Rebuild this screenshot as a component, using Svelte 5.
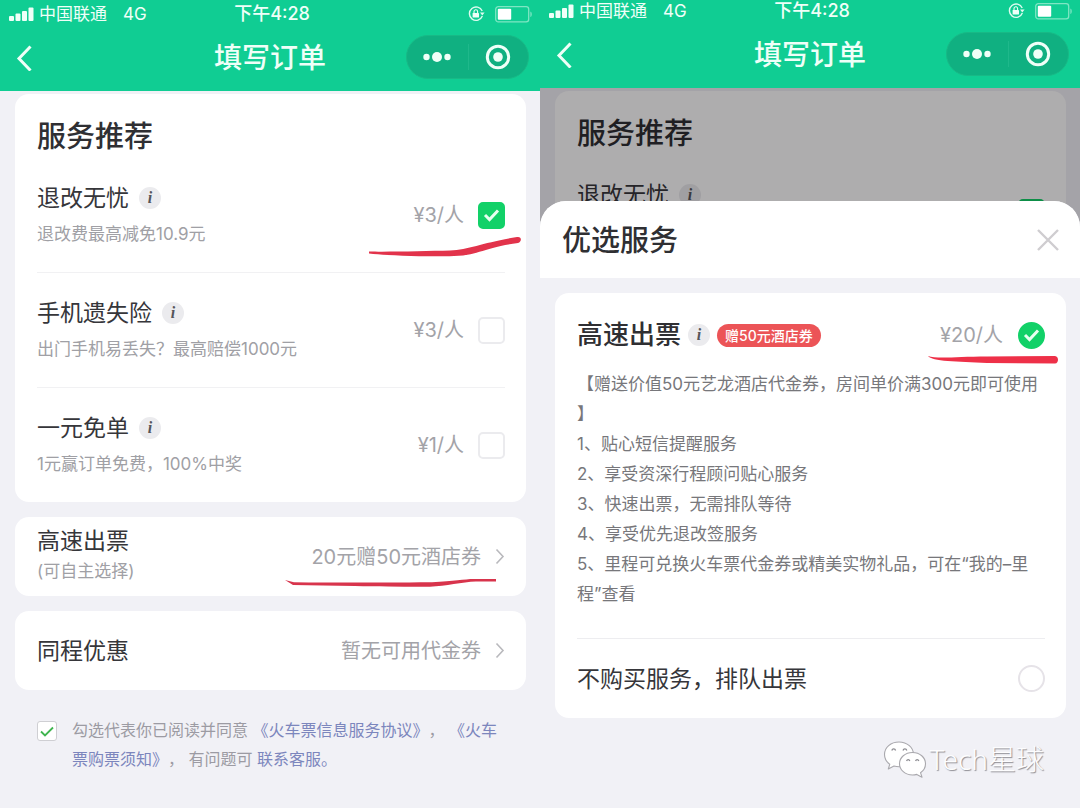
<script>
  const services = [
    { id: 'refund', title: '退改无忧', note: '退改费最高减免10.9元', price: '¥3/人', checked: true },
    { id: 'phone', title: '手机遗失险', note: '出门手机易丢失？最高赔偿1000元', price: '¥3/人', checked: false },
    { id: 'free', title: '一元免单', note: '1元赢订单免费，100%中奖', price: '¥1/人', checked: false }
  ];

  const perks = [
    '1、贴心短信提醒服务',
    '2、享受资深行程顾问贴心服务',
    '3、快速出票，无需排队等待',
    '4、享受优先退改签服务',
    '5、里程可兑换火车票代金券或精美实物礼品，可在“我的–里程”查看'
  ];
</script>

{#snippet info()}
  <span class="info" aria-hidden="true">i</span>
{/snippet}

{#snippet arrow()}
  <svg class="arrow" width="10" height="17" viewBox="0 0 10 17" aria-hidden="true">
    <path d="M1.5 1.5 8 8.5l-6.5 7" fill="none" stroke="#b9b9bd" stroke-width="1.6" />
  </svg>
{/snippet}

{#snippet header()}
  <header class="header">
    <div class="status">
      <div class="carrier">
        <svg width="25" height="15" viewBox="0 0 25 15" fill="#effff8" aria-hidden="true">
          <rect x="0" y="9" width="5" height="5" rx="1" />
          <rect x="6.5" y="6.5" width="5" height="7.5" rx="1" />
          <rect x="13" y="4" width="5" height="10" rx="1" />
          <rect x="19.5" y="0.5" width="5" height="13.5" rx="1" />
        </svg>
        <span>中国联通</span>
        <span class="net">4G</span>
      </div>
      <time class="clock">下午4:28</time>
      <div class="indicators">
        <svg width="17" height="16" viewBox="0 0 17 16" aria-hidden="true">
          <path d="M13 3.2A6.7 6.7 0 1 0 14.7 8" fill="none" stroke="#dffbf0" stroke-width="1.4" transform="rotate(18 8 8)" />
          <path d="M12 6.6h4.6l-2.3 3z" fill="#dffbf0" />
          <rect x="4.6" y="7" width="6.4" height="4.6" rx="0.6" fill="#effff8" />
          <path d="M6 7V5.6a1.8 1.8 0 0 1 3.6 0V7" fill="none" stroke="#effff8" stroke-width="1.1" />
        </svg>
        <svg width="38" height="17" viewBox="0 0 38 17" aria-hidden="true">
          <rect x="0.7" y="0.7" width="33" height="15.2" rx="2.6" fill="none" stroke="#7fe6c4" stroke-width="1.3" />
          <rect x="2.8" y="2.8" width="13.4" height="11" rx="1" fill="#fff" />
          <path d="M35.4 5.5c1.8.8 1.8 4.8 0 5.6z" fill="#7fe6c4" />
        </svg>
      </div>
    </div>
    <div class="nav">
      <button class="back" aria-label="返回">
        <svg width="18" height="28" viewBox="0 0 18 28" aria-hidden="true">
          <path d="M15.5 3.500 4 15.500l11.500 12" fill="none" stroke="#effff8" stroke-width="3" />
        </svg>
      </button>
      <h1>填写订单</h1>
      <div class="capsule">
        <button aria-label="更多">
          <svg width="28" height="12" viewBox="0 0 28 12" fill="#effff8" aria-hidden="true">
            <circle cx="3.5" cy="6" r="3.2" />
            <circle cx="14" cy="6" r="5" />
            <circle cx="24.5" cy="6" r="3.2" />
          </svg>
        </button>
        <button aria-label="关闭小程序">
          <svg width="26" height="26" viewBox="0 0 26 26" aria-hidden="true">
            <circle cx="13" cy="13" r="10.7" fill="none" stroke="#effff8" stroke-width="3" />
            <circle cx="13" cy="13" r="4.8" fill="#effff8" />
          </svg>
        </button>
      </div>
    </div>
  </header>
{/snippet}

{#snippet service(item, prefix)}
  <div class="service">
    <div class="words">
      <label class="name" for={prefix + item.id}>{item.title}{@render info()}</label>
      <p class="note">{item.note}</p>
    </div>
    <span class="price">{item.price}</span>
    <input class="tick" type="checkbox" id={prefix + item.id} checked={item.checked} />
    {#if item.checked && prefix === 'a-'}
      <svg class="stroke stroke-a" width="154" height="22" viewBox="0 0 154 22" aria-hidden="true">
        <path d="M1 15.500C20 16 60 15 82 14.500 102 13.500 116 6 149 1c5-1 5 5 1 6-33 4-42 13-64 13-26 1-66-.5-85-2.500z" fill="#e2334b" />
      </svg>
    {/if}
  </div>
{/snippet}

<main class="page">
  <section class="phone first">
    {@render header()}
    <div class="content">
      <div class="card services">
        <h2>服务推荐</h2>
        {#each services as item (item.id)}
          {@render service(item, 'a-')}
        {/each}
      </div>

      <button class="card link-row">
        <span class="words">
          <span class="name">高速出票</span>
          <span class="small">(可自主选择)</span>
        </span>
        <span class="value">20元赠50元酒店券</span>
        {@render arrow()}
        <svg class="stroke stroke-b" width="214" height="10" viewBox="0 0 214 10" aria-hidden="true">
          <path d="M1 2 10 4.200c45 .6 80 .4 138 0C170 3.400 180 1 190 1h22v2.600h-20c-14 .4-30 4.600-46 5.200C100 9 50 7.600 9 7z" fill="#d8344c" />
        </svg>
      </button>

      <button class="card link-row">
        <span class="name">同程优惠</span>
        <span class="value">暂无可用代金券</span>
        {@render arrow()}
      </button>

      <div class="agree">
        <input class="agree-box" type="checkbox" id="agree" checked />
        <p>
          <label for="agree">勾选代表你已阅读并同意</label> <a href="#info">《火车票信息服务协议》</a>， <a href="#notice">《火车票购票须知》</a>， 有问题可 <a href="#help">联系客服。</a>
        </p>
      </div>
    </div>
  </section>

  <section class="phone second">
    {@render header()}
    <div class="stage">
      <div class="content behind" inert>
        <div class="card services">
          <h2>服务推荐</h2>
          {@render service(services[0], 'b-')}
        </div>
        <div class="shade"></div>
      </div>

      <div class="sheet" role="dialog" aria-labelledby="sheet-title">
        <div class="sheet-head">
          <h2 id="sheet-title">优选服务</h2>
          <button class="close" aria-label="关闭">
            <svg width="24" height="24" viewBox="0 0 24 24" aria-hidden="true">
              <path d="M2 2l20 20M22 2 2 22" fill="none" stroke="#cfcdd0" stroke-width="2.4" />
            </svg>
          </button>
        </div>

        <div class="card options">
          <div class="option">
            <div class="option-head">
              <label class="option-name" for="fast">高速出票</label>
              {@render info()}
              <span class="badge">赠50元酒店券</span>
              <span class="price">¥20/人</span>
              <input class="round" type="radio" name="ticket" id="fast" checked />
              <svg class="stroke stroke-c" width="132" height="10" viewBox="0 0 132 10" aria-hidden="true">
                <path d="M1 1C10 4 30 1.500 60 1.400L128 1c4 .4 4 7.200 0 7.600L60 8C30 6.500 5 6.500 1 1z" fill="#ee3048" />
              </svg>
            </div>
            <div class="perks">
              <p class="gift">【赠送价值50元艺龙酒店代金券，房间单价满300元即可使用】</p>
              {#each perks as perk}
                <p>{perk}</p>
              {/each}
            </div>
          </div>
          <div class="plain">
            <label class="name" for="queue">不购买服务，排队出票</label>
            <input class="round" type="radio" name="ticket" id="queue" />
          </div>
        </div>

        <div class="mark">
          <svg width="44" height="38" viewBox="0 0 44 38" aria-hidden="true">
            <g fill="#fff" stroke="#a9a8ad" stroke-width="1.1" stroke-linejoin="round">
              <path d="M16 2C7.800 2 1.500 7.500 1.500 14.500c0 4 2 7.400 5.300 9.700L5.300 29l5.700-3c1.600.5 3.300.8 5 .8 8.200 0 14.500-5.500 14.500-12.300S24.200 2 16 2z" />
              <path d="M29.500 12.500c-7.300 0-13 5-13 11.200s5.700 11.300 13 11.300c1.500 0 3-.2 4.300-.6l5.200 2.800-1.500-4.500c3-2 5-5.300 5-9 0-6.200-5.700-11.200-13-11.200z" />
            </g>
            <g fill="none" stroke="#8d8c92" stroke-width="1.3">
              <path d="M8.800 10.500a2 2.400 0 0 1 3.800 0M20 10.500a2 2.400 0 0 1 3.800 0M23.600 21a1.700 2 0 0 1 3.200 0M32.600 21a1.700 2 0 0 1 3.200 0" />
            </g>
          </svg>
          <span>Tech星球</span>
        </div>
      </div>
    </div>
  </section>
</main>

<style>
  :global(body) {
    margin: 0;
    background: #f1f1f6;
  }

  .page {
    display: grid;
    grid-template-columns: 1fr 1fr;
    min-height: 100vh;
    color: #36363a;
    font-family: Inter, 'Noto Sans CJK SC', sans-serif;
    font-size: 17px;
    text-spacing-trim: space-all;
  }

  h1,
  h2,
  p {
    margin: 0;
  }

  button {
    margin: 0;
    padding: 0;
    border: 0;
    background: none;
    color: inherit;
    font: inherit;
    text-align: left;
  }

  input {
    appearance: none;
    flex: none;
    margin: 0;
    box-sizing: border-box;
    background-position: center;
    background-repeat: no-repeat;
  }

  svg {
    display: block;
    flex: none;
  }

  .phone {
    display: flex;
    flex-direction: column;
    min-width: 0;
    background: #f1f1f6;
  }

  /* Header */
  .header {
    background: #10cd93;
    color: #effff8;
  }

  .first .header {
    padding-top: 3px;
  }

  .status,
  .nav {
    display: grid;
    grid-template-columns: 1fr auto 1fr;
    align-items: center;
  }

  .status {
    height: 22px;
    padding: 0 7px 0 9px;
    font-size: 17px;
    line-height: 22px;
  }

  .carrier,
  .indicators {
    display: flex;
    align-items: center;
    gap: 5px;
  }

  .net {
    margin-left: 11px;
  }

  .clock {
    padding-left: 2px;
    font-size: 18px;
    font-weight: 500;
  }

  .indicators {
    justify-content: flex-end;
    gap: 10px;
  }

  .nav {
    padding: 10px 11px 12px;
  }

  .back {
    justify-self: start;
    padding-left: 4px;
  }

  .nav h1 {
    padding-top: 2px;
    font-size: 28px;
    font-weight: 500;
    line-height: 40px;
  }

  .capsule {
    display: grid;
    grid-template-columns: 1fr 1fr;
    justify-self: end;
    width: 123px;
    height: 44px;
    box-sizing: border-box;
    border: 1px solid #18b986;
    border-radius: 22px;
    background: #10b081;
  }

  .capsule button {
    display: flex;
    align-items: center;
    justify-content: center;
  }

  .capsule button + button {
    background: linear-gradient(#1fb88b, #1fb88b) left center / 1px 26px no-repeat;
  }

  /* Cards */
  .content {
    display: flex;
    flex-direction: column;
    gap: 15px;
    padding: 3px 14px 0 15px;
  }

  .card {
    border-radius: 14px;
    background: #fff;
    padding: 0 21px 0 22px;
  }

  h2 {
    font-size: 29px;
    font-weight: 500;
    line-height: 42px;
    color: #2f2f33;
  }

  .services h2 {
    padding-top: 22px;
  }

  .service {
    position: relative;
    display: flex;
    align-items: center;
    gap: 14px;
    padding: 24px 0;
    border-bottom: 1px solid #f1f1f3;
  }

  .service:last-child {
    border-bottom: 0;
  }

  .words {
    display: flex;
    flex: 1;
    flex-direction: column;
    gap: 6px;
  }

  .name {
    display: flex;
    align-items: center;
    gap: 10px;
    font-size: 23px;
    line-height: 32px;
  }

  .note,
  .small {
    color: #a0a0a5;
    font-size: 17px;
    line-height: 28px;
  }

  .info {
    display: inline-flex;
    align-items: center;
    justify-content: center;
    width: 22px;
    height: 22px;
    border-radius: 50%;
    background: #ebebee;
    color: #55555b;
    font: italic 700 16px/22px 'Liberation Serif', serif;
  }

  .price,
  .value {
    color: #a3a3a8;
    font-size: 20px;
    line-height: 28px;
  }

  .tick {
    width: 27px;
    height: 27px;
    border: 2px solid #ebebee;
    border-radius: 5px;
    background-color: #fff;
  }

  .tick:checked {
    border-color: #12d168;
    background-color: #12d168;
    background-image: url("data:image/svg+xml,%3Csvg xmlns='http://www.w3.org/2000/svg' width='17' height='14' viewBox='0 0 17 14'%3E%3Cpath d='M2 7l4.500 4.500L15 2.500' fill='none' stroke='%23e6fff0' stroke-width='3'/%3E%3C/svg%3E");
  }

  .link-row {
    position: relative;
    display: flex;
    align-items: center;
    gap: 14px;
    height: 79px;
  }

  .link-row .words {
    gap: 0;
    padding-bottom: 4px;
  }

  .link-row > .name {
    flex: 1;
  }

  .stroke {
    position: absolute;
    pointer-events: none;
  }

  .stroke-a {
    right: -17px;
    bottom: 14px;
  }

  .stroke-b {
    right: 28px;
    bottom: 8px;
  }

  .stroke-c {
    right: -14px;
    bottom: -12px;
  }

  .agree {
    display: flex;
    align-items: flex-start;
    gap: 15px;
    padding: 11px 18px 0 22px;
    color: #9c9ba3;
    font-size: 16px;
    line-height: 29px;
  }

  .agree-box {
    width: 20px;
    height: 20px;
    margin-top: 5px;
    border: 1px solid #cfcfd3;
    border-radius: 3px;
    background-color: #fff;
  }

  .agree-box:checked {
    background-image: url("data:image/svg+xml,%3Csvg xmlns='http://www.w3.org/2000/svg' width='14' height='11' viewBox='0 0 14 11'%3E%3Cpath d='M1 5.500l4 4L13 1.500' fill='none' stroke='%2340b550' stroke-width='1.800'/%3E%3C/svg%3E");
  }

  .agree a {
    color: #7c86bd;
    text-decoration: none;
  }

  /* Second phone: dimmed page with a sheet over it */
  .stage {
    position: relative;
    display: flex;
    flex: 1;
    flex-direction: column;
    overflow: hidden;
  }

  .behind {
    position: absolute;
    inset: 0;
  }

  .shade {
    position: absolute;
    inset: 0;
    background: rgba(4, 0, 4, 0.32);
  }

  .sheet {
    position: relative;
    flex: 1;
    margin-top: 113px;
    border-radius: 26px 26px 0 0;
    background: #f1f1f6;
    overflow: hidden;
  }

  .sheet-head {
    display: flex;
    align-items: center;
    justify-content: space-between;
    height: 77px;
    padding: 0 20px 0 22px;
    background: #fff;
  }

  .sheet-head h2 {
    padding-top: 2px;
  }

  .options {
    margin: 15px 14px 0 15px;
  }

  .option {
    padding: 24px 0 29px;
    border-bottom: 1px solid #ededf0;
  }

  .option-head {
    position: relative;
    display: flex;
    align-items: center;
    gap: 7px;
    height: 36px;
  }

  .option-name {
    color: #2f2f33;
    font-size: 26px;
    font-weight: 500;
    line-height: 36px;
  }

  .badge {
    padding: 0 8px;
    border-radius: 12px;
    background: #ec5457;
    color: #fff;
    font-size: 14px;
    font-weight: 500;
    line-height: 23px;
  }

  .option-head .price {
    margin: 0 8px 0 auto;
  }

  .perks {
    padding-top: 16px;
    color: #77777b;
    line-height: 30px;
  }

  .gift {
    line-break: anywhere;
  }

  .plain {
    display: flex;
    align-items: center;
    justify-content: space-between;
    height: 79px;
  }

  .round {
    width: 27px;
    height: 27px;
    border: 2px solid #e6e3e8;
    border-radius: 50%;
    background-color: #fff;
  }

  .round:checked {
    border-color: #12d168;
    background-color: #12d168;
    background-image: url("data:image/svg+xml,%3Csvg xmlns='http://www.w3.org/2000/svg' width='17' height='14' viewBox='0 0 17 14'%3E%3Cpath d='M2 7l4.500 4.500L15 2.500' fill='none' stroke='%23e6fff0' stroke-width='3'/%3E%3C/svg%3E");
  }

  .mark {
    display: flex;
    align-items: center;
    justify-content: flex-end;
    gap: 3px;
    padding: 22px 36px 0 0;
    color: #fdfdfe;
    font-family: 'Noto Sans', 'Noto Sans CJK SC', sans-serif;
    font-size: 28px;
    font-weight: 300;
    line-height: 38px;
    text-shadow: 1px 1px 1px #8f8e94;
  }
</style>
